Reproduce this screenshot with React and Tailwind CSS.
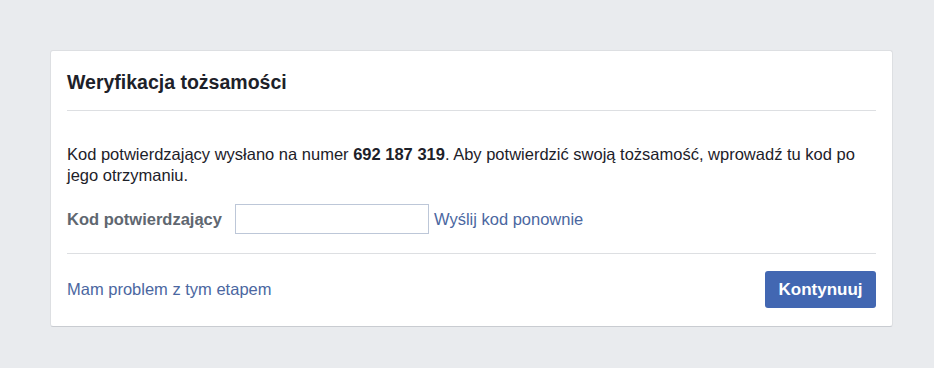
export default function App() {
  return (
    <div className="min-h-[368px] bg-[#e9ebee] px-[50px] pt-[50px] font-['Liberation_Sans',Arial,sans-serif]">
      <div className="w-[843px] rounded-[3px] border border-[#dddfe2] border-b-[#c9ccd1] bg-white">
        <div className="mx-4 flex h-[60px] items-center border-b border-[#dddfe2] pt-[5px]">
          <h2 className="text-[19.5px] font-bold text-[#1d2129]">Weryfikacja tożsamości</h2>
        </div>
        <div className="mx-4 border-b border-[#dddfe2] pb-[19px] pt-[33px]">
          <p className="text-[16.5px] leading-[21px] text-[#1d2129]">
            Kod potwierdzający wysłano na numer <strong>692 187 319</strong>. Aby potwierdzić swoją tożsamość, wprowadź tu kod po jego otrzymaniu.
          </p>
          <div className="mt-[18px] flex items-center">
            <label className="mr-[13px] text-[16.5px] font-bold text-[#606770]">Kod potwierdzający</label>
            <input type="text" className="h-[30px] w-[194px] border border-[#bdc7d8] bg-white px-2 text-[14px] outline-none" />
            <a href="#" className="ml-[5px] text-[16.5px] text-[#4b67a1]">Wyślij kod ponownie</a>
          </div>
        </div>
        <div className="mx-4 flex items-center justify-between pb-[18px] pt-[17px]">
          <a href="#" className="text-[16.5px] text-[#4b67a1]">Mam problem z tym etapem</a>
          <button className="h-[37px] w-[111px] rounded-[3px] bg-[#4267b2] text-[17px] font-bold text-white">Kontynuuj</button>
        </div>
      </div>
    </div>
  );
}
